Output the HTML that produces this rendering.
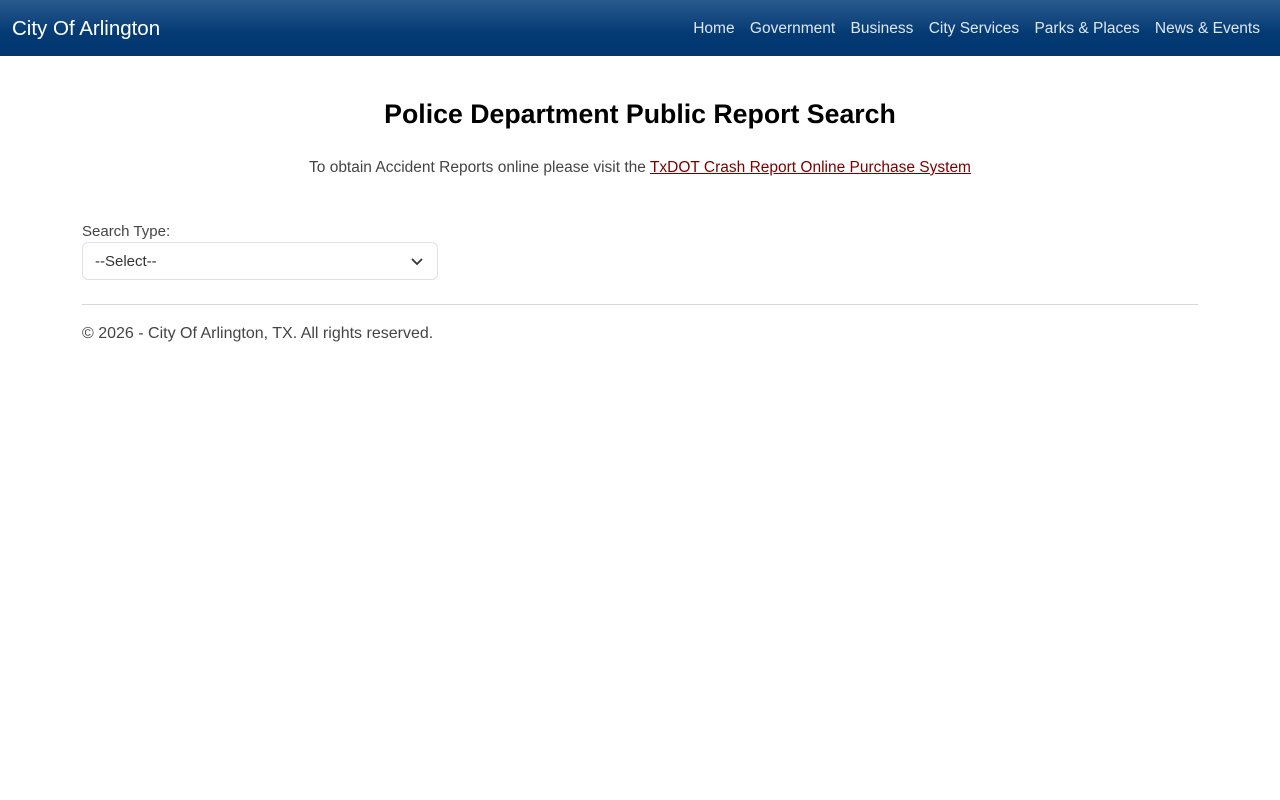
<!DOCTYPE html>
<html><head><meta charset="utf-8"><style>
body{margin:0;font-family:"Liberation Sans",sans-serif;background:#fff;color:#212529}
.nav{height:56px;background:linear-gradient(#2a5a8e,#033a73 60%,#023670);position:relative}
.brand{position:absolute;left:12px;top:17px;color:#fff;font-size:20.5px}
.links{position:absolute;right:20px;top:20px;font-size:15.5px;color:#dfe6f0}
.links span{margin-left:11px}
h1{text-align:center;font-size:26.7px;margin:0;position:absolute;top:99px;width:100%;font-weight:bold;color:#000}
.sub{position:absolute;top:159px;width:100%;text-align:center;font-size:15.5px;color:#444}
.sub a{color:#7a0000}
.lbl{position:absolute;left:82px;top:223px;font-size:15px;color:#444}
.sel{position:absolute;left:82px;top:242px;width:356px;height:38px;border:1px solid #dee2e6;border-radius:6px;box-sizing:border-box;font-size:15px;color:#333;padding:10px 12px}
.sel svg{position:absolute;right:14px;top:13px}
hr{position:absolute;left:82px;top:304px;width:1116px;margin:0;border:0;border-top:1px solid #d8d8d8}
.foot{position:absolute;left:82px;top:325px;font-size:16px;color:#444}
</style></head><body>
<div class="nav"><div class="brand">City Of Arlington</div>
<div class="links"><span>Home</span> <span>Government</span> <span>Business</span> <span>City Services</span> <span>Parks &amp; Places</span> <span>News &amp; Events</span></div></div>
<h1>Police Department Public Report Search</h1>
<div class="sub">To obtain Accident Reports online please visit the <a href="#">TxDOT Crash Report Online Purchase System</a></div>
<div class="lbl">Search Type:</div>
<div class="sel">--Select--<svg width="12" height="10" viewBox="0 0 12 10"><path d="M1 3l5 5 5-5" fill="none" stroke="#333" stroke-width="1.8"/></svg></div>
<hr>
<div class="foot">© 2026 - City Of Arlington, TX. All rights reserved.</div>
</body></html>
